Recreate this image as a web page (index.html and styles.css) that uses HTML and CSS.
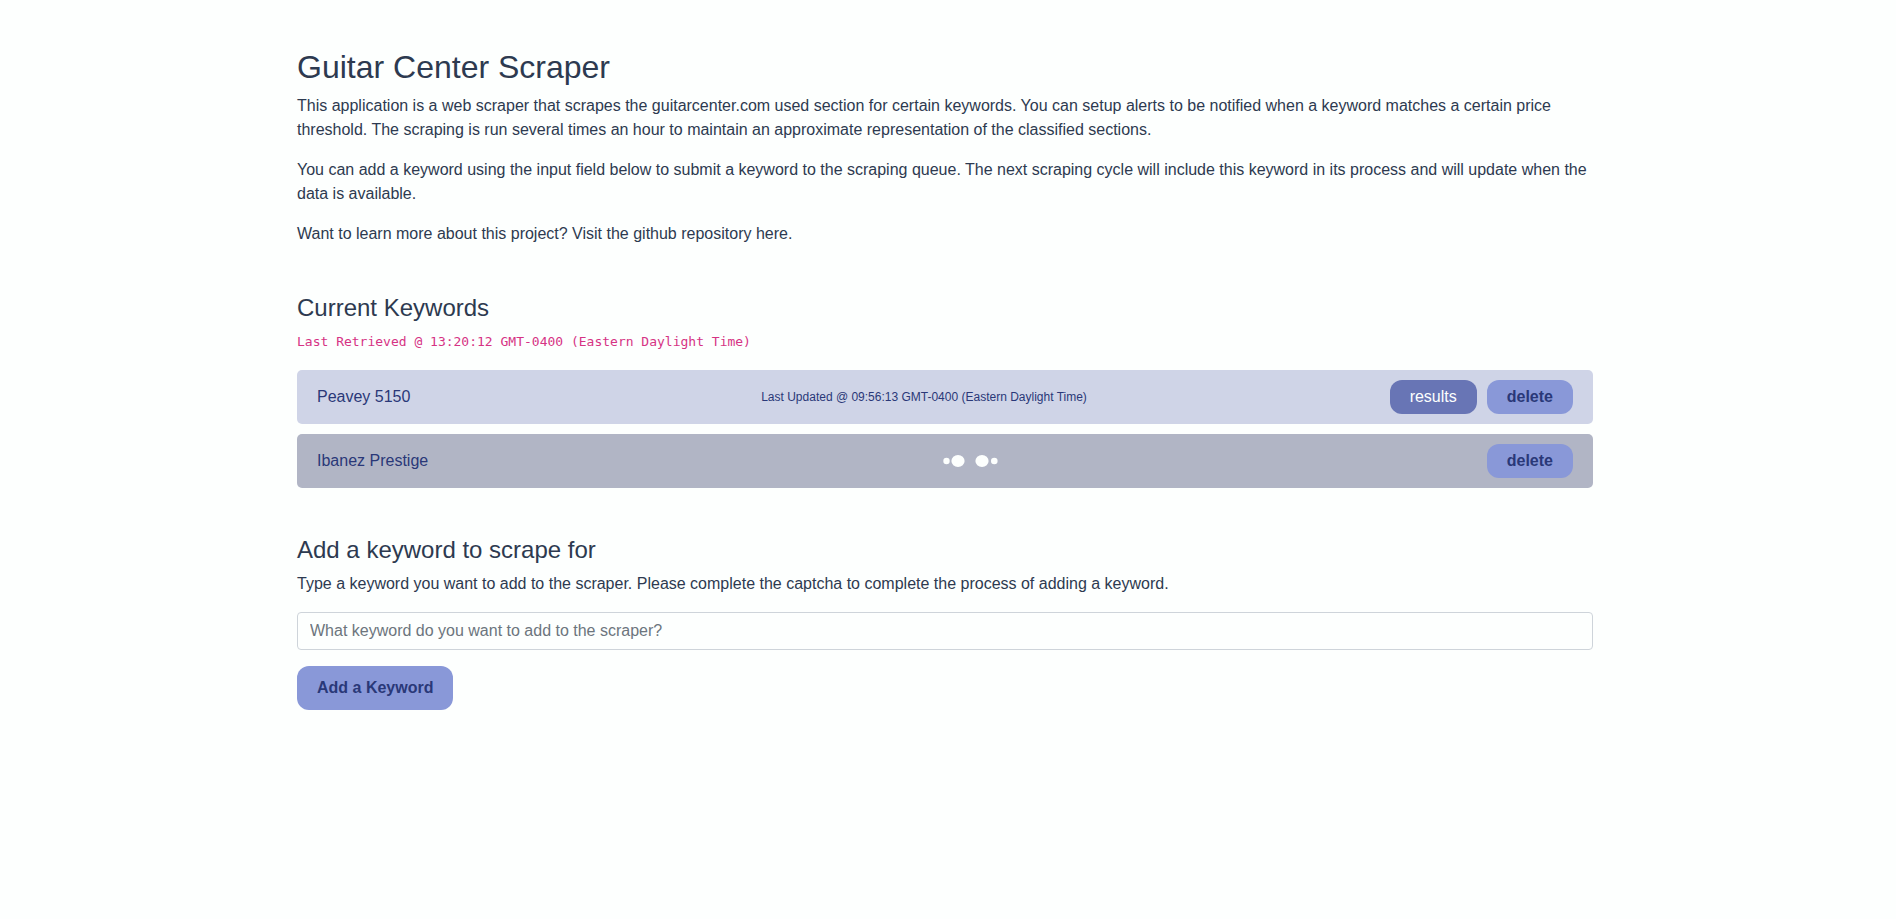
FILE: index.html
```html
<!DOCTYPE html>
<html lang="en">
<head>
<meta charset="utf-8">
<meta name="viewport" content="width=device-width, initial-scale=1">
<title>Guitar Center Scraper</title>
<link rel="stylesheet" href="styles.css">
</head>
<body>
<main class="container">
  <section class="section">
    <h1 class="title">Guitar Center Scraper</h1>
    <p>This application is a web scraper that scrapes the guitarcenter.com used section for certain keywords. You can setup alerts to be notified when a keyword matches a certain price threshold. The scraping is run several times an hour to maintain an approximate representation of the classified sections.</p>
    <p>You can add a keyword using the input field below to submit a keyword to the scraping queue. The next scraping cycle will include this keyword in its process and will update when the data is available.</p>
    <p>Want to learn more about this project? Visit the github repository <a class="link" href="#">here.</a></p>
  </section>

  <section class="section">
    <h2 class="subtitle">Current Keywords</h2>
    <p><code class="retrieved">Last Retrieved @ 13:20:12 GMT-0400 (Eastern Daylight Time)</code></p>
    <ul class="keywords">
      <li class="keyword">
        <span>Peavey 5150</span>
        <small class="updated">Last Updated @ 09:56:13 GMT-0400 (Eastern Daylight Time)</small>
        <div class="actions">
          <button class="btn btn-results" type="button">results</button>
          <button class="btn" type="button">delete</button>
        </div>
      </li>
      <li class="keyword keyword-pending">
        <span>Ibanez Prestige</span>
        <svg class="loader" width="56" height="14" viewBox="0 0 56 14" role="img" aria-label="Loading">
          <circle cx="3.5" cy="7" r="3.2"/>
          <ellipse cx="15" cy="7" rx="6.6" ry="6.1"/>
          <ellipse cx="39" cy="7" rx="6.6" ry="6.1"/>
          <circle cx="51.3" cy="7" r="3.3"/>
        </svg>
        <div class="actions">
          <button class="btn" type="button">delete</button>
        </div>
      </li>
    </ul>
  </section>

  <section class="section">
    <h2 class="subtitle">Add a keyword to scrape for</h2>
    <form class="form">
      <label for="keyword">Type a keyword you want to add to the scraper. Please complete the captcha to complete the process of adding a keyword.</label>
      <input class="input" id="keyword" type="text" placeholder="What keyword do you want to add to the scraper?">
      <button class="btn btn-large" type="button">Add a Keyword</button>
    </form>
  </section>
</main>
</body>
</html>
```
FILE: styles.css
```css
* {
  box-sizing: border-box;
}

body {
  margin: 0;
  padding-right: 6px;
  background: #fdfffe;
  color: #2d3a50;
  font: 16px/24px "Liberation Sans", Arial, sans-serif;
}

.container {
  display: flex;
  flex-direction: column;
  gap: 48px;
  max-width: 1320px;
  margin: 0 auto;
  padding: 48px 12px;
}

.title,
.subtitle {
  margin: 0 0 8px;
  font-weight: 400;
}

.title {
  font-size: 32px;
  line-height: 38px;
}

.subtitle {
  font-size: 24px;
  line-height: 28px;
}

p {
  margin: 0 0 16px;
}

p:last-child {
  margin-bottom: 0;
}

.link {
  color: inherit;
  text-decoration: none;
}

.retrieved {
  display: block;
  color: #d63384;
  font-family: Consolas, "DejaVu Sans Mono", monospace;
  font-size: 13px;
}

.keywords {
  display: flex;
  flex-direction: column;
  gap: 10px;
  margin: 0;
  padding: 0;
  list-style: none;
}

.keyword {
  display: flex;
  align-items: center;
  justify-content: space-between;
  padding: 10px 20px;
  border-radius: 5px;
  background: #cfd4e7;
  color: #2a3878;
}

.keyword-pending {
  background: #b1b5c5;
}

.updated {
  padding-left: 48px;
  font-size: 12px;
}

.loader {
  box-sizing: content-box;
  padding-left: 28px;
  fill: #fdfffe;
}

.actions {
  display: flex;
  gap: 10px;
}

.btn {
  padding: 5px 20px;
  border: 0;
  border-radius: 12px;
  background: #8998d8;
  color: #2a3878;
  font: inherit;
  font-weight: 700;
  cursor: pointer;
}

.btn-results {
  background: #6875b5;
  color: #fdfffe;
  font-weight: 400;
}

.btn-large {
  padding: 10px 20px;
}

.form {
  display: flex;
  flex-direction: column;
  align-items: flex-start;
  gap: 16px;
}

.input {
  width: 100%;
  padding: 6px 12px;
  border: 1px solid #ced4da;
  border-radius: 4px;
  background: #fdfffe;
  color: inherit;
  font: inherit;
}

.input::placeholder {
  color: #6c757d;
  opacity: 1;
}
```
